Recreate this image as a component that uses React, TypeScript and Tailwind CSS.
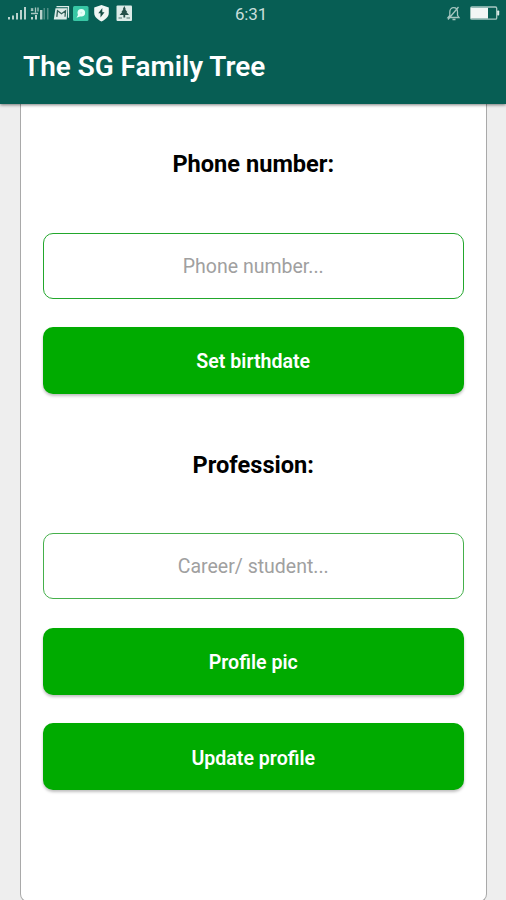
import type { ReactNode } from "react";

function StatusBar() {
  return (
    <div className="flex h-[27px] items-center bg-[#075e54] text-[#c9dedb]">
      <svg className="h-[27px] w-[140px] shrink-0" viewBox="0 0 140 27" fill="none">
        <g fill="#b9d2cd">
          <rect x="8" y="17" width="2" height="2.5" />
          <rect x="12" y="15.5" width="2" height="4" />
          <rect x="16" y="13" width="2" height="6.5" />
          <rect x="20" y="10" width="2" height="9.5" />
          <rect x="24" y="7" width="2" height="12.5" />
          <rect x="31" y="17" width="2" height="2.5" />
          <rect x="35" y="15" width="2" height="4.5" />
          <rect x="40" y="10" width="2.4" height="9.5" />
        </g>
        <rect x="43.5" y="8" width="1.5" height="11.5" fill="#4f8d85" />
        <rect x="47" y="8" width="1.5" height="11.5" fill="#4f8d85" />
        <path d="M31 8.5l2.2 2.2M33.2 8.5L31 10.7M35.5 7.5v5M38 7.5v4M31 13.5h7" stroke="#a9c8c2" strokeWidth="1.3" />
        <path d="M56.5 6.7h12v11" stroke="#dcebe8" strokeWidth="1.2" />
        <path d="M55.5 8.2h12l-.8 11.3H53.8z" fill="#dcebe8" />
        <path d="M56.8 16.8l.7-6 4 3 4-3-.5 6" stroke="#315e57" strokeWidth="1.3" />
        <rect x="73" y="6" width="15.5" height="15" rx="1.5" fill="#38c7a5" />
        <circle cx="81.3" cy="12.8" r="3.8" fill="#e7fff9" />
        <path d="M78.5 14l-2 3.8 4-1.5z" fill="#e7fff9" />
        <circle cx="81.3" cy="12.8" r="1" fill="#c4f3e7" />
        <path d="M101.5 5l7.3 2.6v5.2c0 3.8-3 6.7-7.3 8.7-4.3-2-7.3-4.9-7.3-8.7V7.6z" fill="#f0f7f5" />
        <path d="M102.3 8l-4 5.3h2.2v4.2l4-5.3h-2.2z" fill="#164e46" />
        <rect x="116.5" y="5.5" width="15.5" height="15.5" rx="1" fill="#dcebe8" />
        <path d="M124.3 6l1.5 3.2h-.6l2 2.7h-.8l2.6 3h-9.4l2.6-3h-.8l2-2.7h-.6zM123.4 14.5h1.8v3h-1.8z" fill="#244f49" />
        <path d="M118.5 18h3.5m4.5 0h3.5" stroke="#527973" strokeWidth="1.1" />
      </svg>
      <time className="ml-[95px] pt-px text-[17px] leading-[27px] tracking-[-0.2px]">6:31</time>
      <svg className="ml-auto h-[27px] w-[66px] shrink-0" viewBox="0 0 66 27" fill="none">
        <path d="M8 17.5h11l-1.5-2.2V12c0-2.6-1.5-4.3-3.8-4.3S9.8 9.4 9.8 12v3.3zM12.5 19.5h3M18.5 7L8 19.5" stroke="#a5c6c0" strokeWidth="1.3" />
        <rect x="30.7" y="7" width="26" height="12.2" rx="1.3" stroke="#a8c8c2" strokeWidth="1.3" />
        <rect x="31" y="7.8" width="17" height="10.7" fill="#f2f6f5" />
        <rect x="57.2" y="10.5" width="2" height="5" rx=".7" fill="#e0ecea" />
      </svg>
    </div>
  );
}

function Label({ children }: { children: ReactNode }) {
  return <h2 className="h-7 text-center text-[23.6px] leading-7 font-bold text-black">{children}</h2>;
}

function Field({ placeholder, tone }: { placeholder: string; tone: string }) {
  return (
    <input
      className={`block h-[66px] w-full rounded-[10px] border bg-white pt-px text-center text-[19.5px] outline-none placeholder:text-[#a0a0a0] ${tone}`}
      placeholder={placeholder}
      aria-label={placeholder}
    />
  );
}

function Action({ children }: { children: ReactNode }) {
  return (
    <button className="block h-[67px] w-full rounded-[10px] bg-[#00ab00] pt-[3px] text-center text-[19.6px] font-semibold text-white shadow-[0_2px_3px_rgba(0,0,0,0.25)]">
      {children}
    </button>
  );
}

export default function App() {
  return (
    <div className="flex h-[900px] w-[506px] flex-col overflow-hidden bg-[#eeeeee] font-['Roboto',sans-serif]">
      <header className="z-10 h-[104px] shrink-0 bg-[#075e54] shadow-[0_1px_3px_rgba(0,0,0,0.5)]">
        <StatusBar />
        <h1 className="pt-[22px] pl-[23px] text-[27.9px] leading-9 font-semibold text-white">The SG Family Tree</h1>
      </header>
      <main className="mr-[19px] ml-5 h-[798px] shrink-0 rounded-b-[8px] border-x border-b border-[#a9a9a9] bg-white pt-[46px] pr-[22px] pl-[21.5px]">
        <section>
          <Label>Phone number:</Label>
          <div className="mt-[55px] flex flex-col gap-7">
            <Field placeholder="Phone number..." tone="border-[#22a72c]" />
            <Action>Set birthdate</Action>
          </div>
        </section>
        <section className="mt-[57px]">
          <Label>Profession:</Label>
          <div className="mt-[54.4px] flex flex-col gap-[28.5px]">
            <Field placeholder="Career/ student..." tone="border-[#45b04b]" />
            <Action>Profile pic</Action>
            <Action>Update profile</Action>
          </div>
        </section>
      </main>
    </div>
  );
}
